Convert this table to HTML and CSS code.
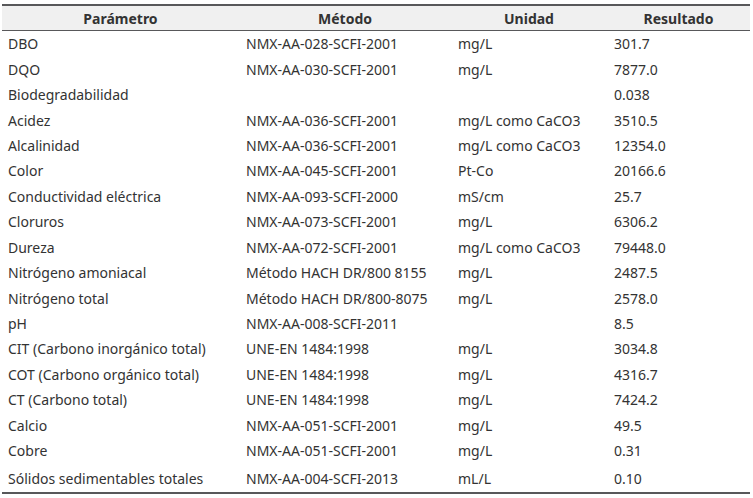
FILE: index.html
```html
<!DOCTYPE html>
<html lang="es">
<head>
<meta charset="utf-8">
<link rel="stylesheet" href="styles.css">
</head>
<body>
<table class="results">
  <colgroup>
    <col class="c-param"><col class="c-method"><col class="c-unit"><col class="c-result">
  </colgroup>
  <thead>
    <tr><th>Parámetro</th><th>Método</th><th>Unidad</th><th>Resultado</th></tr>
  </thead>
  <tbody>
    <tr><td>DBO</td><td>NMX-AA-028-SCFI-2001</td><td>mg/L</td><td>301.7</td></tr>
    <tr><td>DQO</td><td>NMX-AA-030-SCFI-2001</td><td>mg/L</td><td>7877.0</td></tr>
    <tr><td>Biodegradabilidad</td><td></td><td></td><td>0.038</td></tr>
    <tr><td>Acidez</td><td>NMX-AA-036-SCFI-2001</td><td>mg/L como CaCO3</td><td>3510.5</td></tr>
    <tr><td>Alcalinidad</td><td>NMX-AA-036-SCFI-2001</td><td>mg/L como CaCO3</td><td>12354.0</td></tr>
    <tr><td>Color</td><td>NMX-AA-045-SCFI-2001</td><td>Pt-Co</td><td>20166.6</td></tr>
    <tr><td>Conductividad eléctrica</td><td>NMX-AA-093-SCFI-2000</td><td>mS/cm</td><td>25.7</td></tr>
    <tr><td>Cloruros</td><td>NMX-AA-073-SCFI-2001</td><td>mg/L</td><td>6306.2</td></tr>
    <tr><td>Dureza</td><td>NMX-AA-072-SCFI-2001</td><td>mg/L como CaCO3</td><td>79448.0</td></tr>
    <tr><td>Nitrógeno amoniacal</td><td>Método HACH DR/800 8155</td><td>mg/L</td><td>2487.5</td></tr>
    <tr><td>Nitrógeno total</td><td>Método HACH DR/800-8075</td><td>mg/L</td><td>2578.0</td></tr>
    <tr><td>pH</td><td>NMX-AA-008-SCFI-2011</td><td></td><td>8.5</td></tr>
    <tr><td>CIT (Carbono inorgánico total)</td><td>UNE-EN 1484:1998</td><td>mg/L</td><td>3034.8</td></tr>
    <tr><td>COT (Carbono orgánico total)</td><td>UNE-EN 1484:1998</td><td>mg/L</td><td>4316.7</td></tr>
    <tr><td>CT (Carbono total)</td><td>UNE-EN 1484:1998</td><td>mg/L</td><td>7424.2</td></tr>
    <tr><td>Calcio</td><td>NMX-AA-051-SCFI-2001</td><td>mg/L</td><td>49.5</td></tr>
    <tr><td>Cobre</td><td>NMX-AA-051-SCFI-2001</td><td>mg/L</td><td>0.31</td></tr>
    <tr class="last"><td>Sólidos sedimentables totales</td><td>NMX-AA-004-SCFI-2013</td><td>mL/L</td><td>0.10</td></tr>
  </tbody>
</table>
</body>
</html>
```
FILE: styles.css
```css
html, body {
  margin: 0;
  background: #ffffff;
}
body {
  padding: 4px 3px 0 2px;
  font-family: "Noto Sans", "Open Sans", sans-serif;
  font-size: 14px;
  color: #333333;
}
.results {
  width: 748px;
  border-collapse: collapse;
  table-layout: fixed;
  border-top: 2px solid #58585a;
  border-bottom: 2px solid #58585a;
}
.c-param { width: 237px; }
.c-method { width: 212px; }
.c-unit { width: 156px; }
.c-result { width: 143px; }
.results th {
  background: #f0f0f0;
  font-weight: 700;
  color: #333333;
  text-align: center;
  height: 23px;
  padding: 1px 0 0 0;
  line-height: 19px;
  border-bottom: 1px solid #58585a;
  white-space: nowrap;
}
.results td {
  height: 25.44px;
  padding: 0 0 0 7px;
  line-height: 19px;
  white-space: nowrap;
  vertical-align: middle;
}
.results td:first-child {
  padding-left: 6px;
}
.results .last td {
  height: 26.5px;
  padding-top: 2px;
}
```
